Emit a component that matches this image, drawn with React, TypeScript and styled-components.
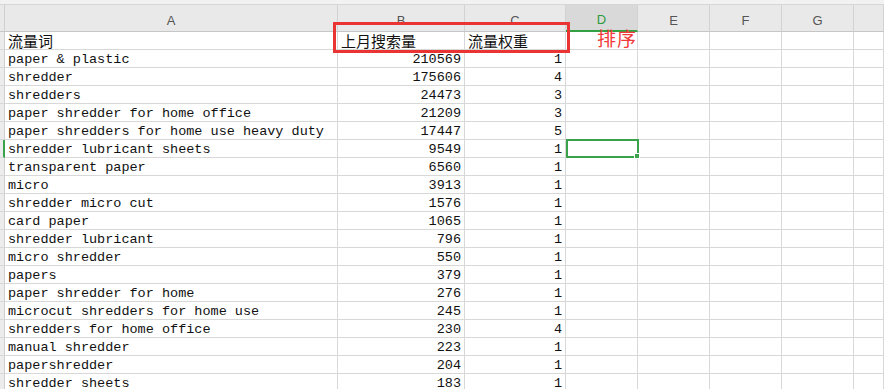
import React from "react";
import styled, { createGlobalStyle, css } from "styled-components";

const Global = createGlobalStyle`
  html, body { margin: 0; padding: 0; background: #ffffff; overflow: hidden; }
  #root { width: 884px; height: 389px; overflow: hidden; }
`;

const COLS = [
  { key: "A", w: 333 },
  { key: "B", w: 127 },
  { key: "C", w: 101 },
  { key: "D", w: 72 },
  { key: "E", w: 72 },
  { key: "F", w: 72 },
  { key: "G", w: 72 },
  { key: "H", w: 30 },
];

const rows: [string, string, string][] = [
  ["流量词", "上月搜索量", "流量权重"],
  ["paper & plastic", "210569", "1"],
  ["shredder", "175606", "4"],
  ["shredders", "24473", "3"],
  ["paper shredder for home office", "21209", "3"],
  ["paper shredders for home use heavy duty", "17447", "5"],
  ["shredder lubricant sheets", "9549", "1"],
  ["transparent paper", "6560", "1"],
  ["micro", "3913", "1"],
  ["shredder micro cut", "1576", "1"],
  ["card paper", "1065", "1"],
  ["shredder lubricant", "796", "1"],
  ["micro shredder", "550", "1"],
  ["papers", "379", "1"],
  ["paper shredder for home", "276", "1"],
  ["microcut shredders for home use", "245", "1"],
  ["shredders for home office", "230", "4"],
  ["manual shredder", "223", "1"],
  ["papershredder", "204", "1"],
  ["shredder sheets", "183", "1"],
];

const ACTIVE_ROW = 6;

const Sheet = styled.div`
  position: relative;
  width: 884px;
  height: 389px;
  overflow: hidden;
  background: #fff;
`;

const TopStrip = styled.div`
  height: 4px;
  background: #f2f2f2;
  border-bottom: 1px solid #d6d6d6;
`;

const Grid = styled.div`
  display: grid;
  grid-template-columns: 5px ${COLS.map((c) => c.w + "px").join(" ")};
`;

const Corner = styled.div`
  box-sizing: border-box;
  height: 27px;
  background: #e9e9e9;
  border-right: 1px solid #cfcfcf;
  border-bottom: 1px solid #c6c6c6;
`;

const ColHead = styled.div<{ $active?: boolean }>`
  box-sizing: border-box;
  height: 27px;
  display: flex;
  align-items: center;
  justify-content: center;
  padding-top: 4px;
  font-family: "Liberation Sans", Arial, sans-serif;
  font-size: 13px;
  color: #555;
  background: #e9e9e9;
  border-right: 1px solid #d2d2d2;
  border-bottom: 1px solid #c6c6c6;
  ${(p) =>
    p.$active &&
    css`
      background: #d9d9d9;
      color: #2f9a3c;
      border-bottom: 2px solid #33a043;
    `}
`;

const RowHead = styled.div<{ $active?: boolean }>`
  box-sizing: border-box;
  height: 18px;
  background: #ececec;
  border-right: 1px solid #cfcfcf;
  border-bottom: 1px solid #d8d8d8;
  ${(p) =>
    p.$active &&
    css`
      border-right: 2px solid #3aa24a;
    `}
`;

const Cell = styled.div<{ $num?: boolean; $cjk?: boolean; $selected?: boolean }>`
  position: relative;
  box-sizing: border-box;
  height: 18px;
  border-right: 1px solid #d8d8d8;
  border-bottom: 1px solid #d8d8d8;
  padding: 2px 3px 0;
  font-family: "Liberation Mono", "DejaVu Sans Mono", monospace;
  font-size: 13.5px;
  line-height: 16px;
  color: #111;
  white-space: nowrap;
  overflow: visible;
  text-align: ${(p) => (p.$num ? "right" : "left")};
  ${(p) =>
    p.$cjk &&
    css`
      font-family: "Noto Sans CJK SC", "Noto Sans", sans-serif;
      font-size: 15px;
      padding-top: 0;
      line-height: 17px;
    `}
  ${(p) =>
    p.$selected &&
    css`
      &::before {
        content: "";
        position: absolute;
        left: 0;
        top: -1px;
        right: -2px;
        bottom: -1px;
        border: 2px solid #3aa24a;
        z-index: 2;
      }
      &::after {
        content: "";
        position: absolute;
        right: -3px;
        bottom: -2px;
        width: 4px;
        height: 4px;
        background: #3aa24a;
        border: 1px solid #fff;
        z-index: 3;
      }
    `}
`;

const RedFrame = styled.div`
  position: absolute;
  left: 333px;
  top: 22px;
  width: 237px;
  height: 31px;
  box-sizing: border-box;
  border: 3px solid #ea3434;
  pointer-events: none;
`;

const Note = styled.div`
  position: absolute;
  left: 597px;
  top: 25px;
  font-family: "Noto Sans CJK SC", sans-serif;
  font-size: 19px;
  line-height: 26px;
  color: #f23a3a;
  letter-spacing: 1px;
`;

export default function App() {
  return (
    <>
      <Global />
      <Sheet>
        <TopStrip />
        <Grid>
          <Corner />
          {COLS.map((c) => (
            <ColHead key={c.key} $active={c.key === "D"}>
              {c.key === "H" ? "" : c.key}
            </ColHead>
          ))}
          {rows.map((r, i) => (
            <React.Fragment key={i}>
              <RowHead $active={i === ACTIVE_ROW} />
              <Cell $cjk={i === 0}>{r[0]}</Cell>
              <Cell $cjk={i === 0} $num={i !== 0}>
                {r[1]}
              </Cell>
              <Cell $cjk={i === 0} $num={i !== 0}>
                {r[2]}
              </Cell>
              <Cell $selected={i === ACTIVE_ROW} />
              <Cell />
              <Cell />
              <Cell />
              <Cell />
            </React.Fragment>
          ))}
        </Grid>
        <RedFrame />
        <Note>排序</Note>
      </Sheet>
    </>
  );
}
